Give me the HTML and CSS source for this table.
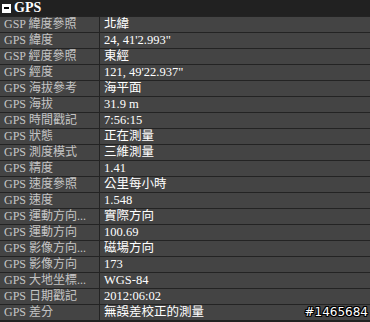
FILE: index.html
```html
<!DOCTYPE html>
<html>
<head>
<meta charset="utf-8">
<link rel="stylesheet" href="styles.css">
</head>
<body>
<div class="panel">
  <div class="header">
    <span class="toggle"><span class="minus"></span></span>
    <span class="title">GPS</span>
  </div>
  <div class="rows">
    <div class="row"><div class="k">GSP 緯度參照</div><div class="v">北緯</div></div>
    <div class="row"><div class="k">GPS 緯度</div><div class="v">24, 41'2.993"</div></div>
    <div class="row"><div class="k">GSP 經度參照</div><div class="v">東經</div></div>
    <div class="row"><div class="k">GPS 經度</div><div class="v">121, 49'22.937"</div></div>
    <div class="row"><div class="k">GPS 海拔參考</div><div class="v">海平面</div></div>
    <div class="row"><div class="k">GPS 海拔</div><div class="v">31.9 m</div></div>
    <div class="row"><div class="k">GPS 時間戳記</div><div class="v">7:56:15</div></div>
    <div class="row"><div class="k">GPS 狀態</div><div class="v">正在測量</div></div>
    <div class="row"><div class="k">GPS 測度模式</div><div class="v">三維測量</div></div>
    <div class="row"><div class="k">GPS 精度</div><div class="v">1.41</div></div>
    <div class="row"><div class="k">GPS 速度參照</div><div class="v">公里每小時</div></div>
    <div class="row"><div class="k">GPS 速度</div><div class="v">1.548</div></div>
    <div class="row"><div class="k">GPS 運動方向...</div><div class="v">實際方向</div></div>
    <div class="row"><div class="k">GPS 運動方向</div><div class="v">100.69</div></div>
    <div class="row"><div class="k">GPS 影像方向...</div><div class="v">磁場方向</div></div>
    <div class="row"><div class="k">GPS 影像方向</div><div class="v">173</div></div>
    <div class="row"><div class="k">GPS 大地坐標...</div><div class="v">WGS-84</div></div>
    <div class="row"><div class="k">GPS 日期戳記</div><div class="v">2012:06:02</div></div>
    <div class="row last"><div class="k">GPS 差分</div><div class="v">無誤差校正的測量</div><span class="mark">#1465684</span></div>
  </div>
</div>
</body>
</html>
```

FILE: styles.css
```css
html, body {
  margin: 0;
  padding: 0;
  background: #222222;
}
.panel {
  width: 370px;
  height: 322px;
  background: #222222;
  font-family: "Liberation Serif", "Noto Sans CJK TC", serif;
  font-size: 12px;
}
.header {
  height: 16px;
  display: flex;
  align-items: center;
  background: #212121;
}
.toggle {
  width: 9px;
  height: 9px;
  margin-left: 2px;
  background: #ffffff;
  display: flex;
  align-items: center;
  justify-content: center;
}
.minus {
  width: 5px;
  height: 2px;
  background: #000;
}
.title {
  margin-left: 3px;
  color: #ffffff;
  font-weight: bold;
  font-size: 14px;
  line-height: 16px;
}
.rows {
  display: flex;
  flex-direction: column;
}
.row {
  position: relative;
  display: flex;
  height: 15px;
  border-top: 1px solid #232323;
  background: #444444;
  line-height: 15px;
}
.k {
  width: 95px;
  padding-left: 4px;
  border-right: 1px solid #232323;
  color: #c4c4c4;
  white-space: nowrap;
  overflow: hidden;
}
.v {
  padding-left: 4px;
  color: #ffffff;
  font-size: 12.5px;
  white-space: nowrap;
}
.mark {
  position: absolute;
  right: 2px;
  top: 0;
  font-family: "DejaVu Sans", sans-serif;
  font-size: 12px;
  color: #ffffff;
  text-shadow: 1px 0 0 #000, -1px 0 0 #000, 0 1px 0 #000, 0 -1px 0 #000, 1px 1px 0 #000, -1px -1px 0 #000, 1px -1px 0 #000, -1px 1px 0 #000;
}
```
